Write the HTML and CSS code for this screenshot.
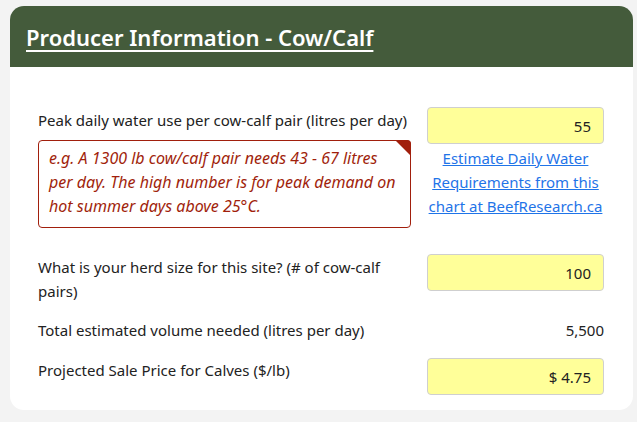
FILE: index.html
```html
<!DOCTYPE html>
<html>
<head>
<meta charset="utf-8">
<link rel="stylesheet" href="styles.css">
</head>
<body>
<div class="card">
  <div class="card-header">
    <h2 class="title">Producer Information - Cow/Calf</h2>
  </div>
  <div class="card-body">
    <div class="row row-first">
      <div class="left">
        <div class="label">Peak daily water use per cow-calf pair (litres per day)</div>
        <div class="hint">e.g. A 1300 lb cow/calf pair needs 43 - 67 litres per day. The high number is for peak demand on hot summer days above 25°C.</div>
      </div>
      <div class="right">
        <div class="input">55</div>
        <a class="link" href="#">Estimate Daily Water Requirements from this chart at BeefResearch.ca</a>
      </div>
    </div>
    <div class="row row-herd">
      <div class="left">
        <div class="label">What is your herd size for this site? (# of cow-calf pairs)</div>
      </div>
      <div class="right">
        <div class="input">100</div>
      </div>
    </div>
    <div class="row row-total">
      <div class="left">
        <div class="label">Total estimated volume needed (litres per day)</div>
      </div>
      <div class="right">
        <div class="value">5,500</div>
      </div>
    </div>
    <div class="row row-price">
      <div class="left">
        <div class="label">Projected Sale Price for Calves ($/lb)</div>
      </div>
      <div class="right">
        <div class="input">$ 4.75</div>
      </div>
    </div>
  </div>
</div>
</body>
</html>
```
FILE: styles.css
```css
html, body {
  margin: 0;
  padding: 0;
  background: #f3f3f3;
}
body {
  font-family: "Noto Sans", "Open Sans", sans-serif;
  color: #222;
  padding-top: 6px;
}
.card {
  margin-left: 10px;
  width: 623px;
  background: #fff;
  border-radius: 14px;
  overflow: hidden;
}
.card-header {
  background: #445b3b;
  height: 61px;
  padding-left: 16px;
  display: flex;
  align-items: center;
}
.title {
  margin: 0;
  color: #fff;
  font-size: 22px;
  font-weight: 600;
  text-decoration: underline;
  text-underline-offset: 4px;
  text-decoration-thickness: 2px;
  letter-spacing: 0;
}
.card-body {
  padding: 40px 29px 15px 28px;
}
.row {
  display: grid;
  grid-template-columns: 1fr 177px;
  column-gap: 16px;
}
.label {
  font-size: 15px;
  line-height: 24px;
}
.row-first .label { padding-top: 1px; }
.hint {
  margin-top: 8px;
  border: 1px solid #a11f0c;
  border-radius: 4px;
  color: #a11f0c;
  font-style: italic;
  font-size: 16px;
  line-height: 24px;
  padding: 5px 12px 9px 10px;
  position: relative;
}
.hint::after {
  content: "";
  position: absolute;
  top: -1px;
  right: -1px;
  width: 0;
  height: 0;
  border-top: 16px solid #a11f0c;
  border-left: 16px solid transparent;
  border-top-right-radius: 4px;
}
.input {
  height: 35px;
  background: #ffff99;
  border: 1px solid #cfcfcf;
  border-radius: 4px;
  box-sizing: content-box;
  display: flex;
  align-items: center;
  justify-content: flex-end;
  padding-right: 12px;
  font-size: 15px;
}
.link {
  display: block;
  margin-top: 2px;
  text-align: center;
  color: #1f74e8;
  text-decoration: underline;
  font-size: 15px;
  line-height: 24px;
}
.row-herd { margin-top: 26px; }
.row-herd .label { padding-top: 1px; }
.row-total { margin-top: 15px; }
.value {
  text-align: right;
  font-size: 15px;
  line-height: 24px;
}
.row-price { margin-top: 16px; }
```
